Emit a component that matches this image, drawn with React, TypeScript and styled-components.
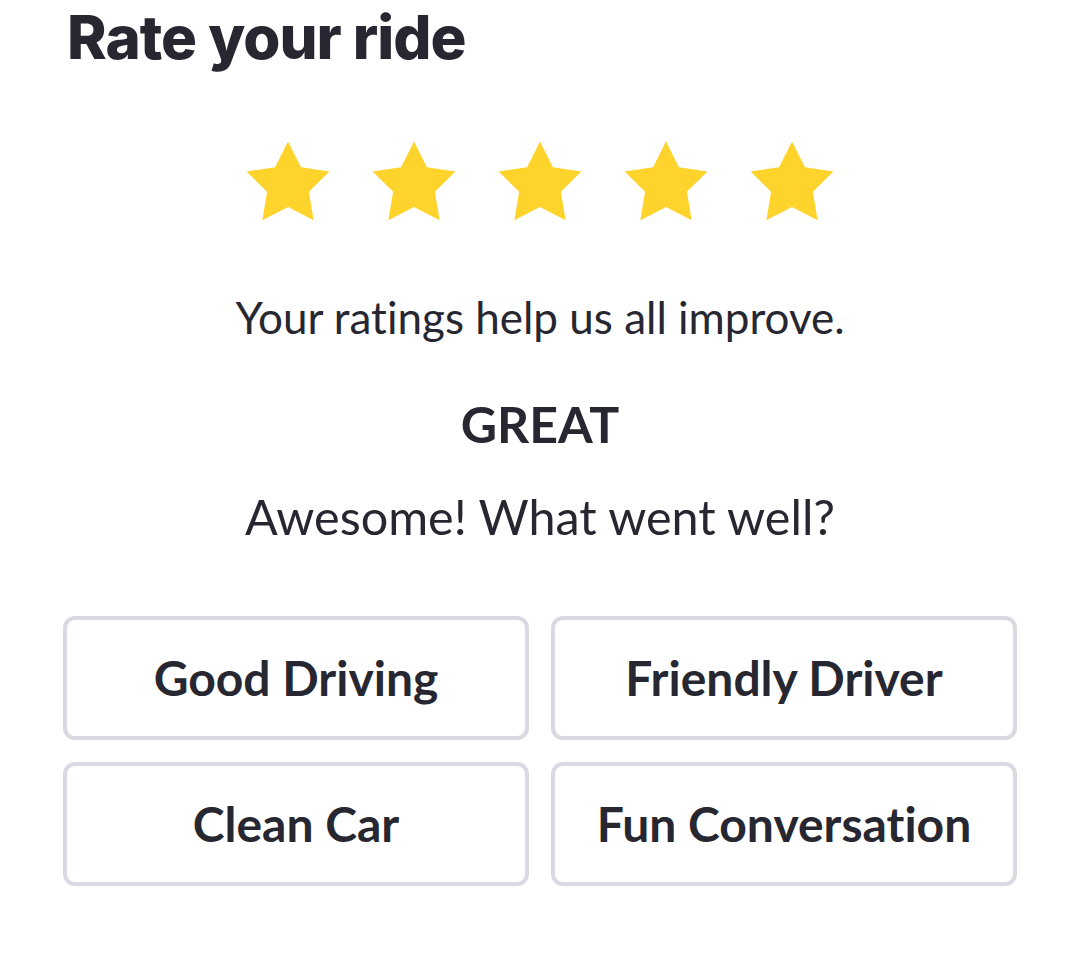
import React from "react";
import styled, { createGlobalStyle } from "styled-components";

const GlobalStyle = createGlobalStyle`
  html, body {
    margin: 0;
    padding: 0;
    background: #ffffff;
  }
  body {
    font-family: "Lato", "Liberation Sans", sans-serif;
    font-variant-ligatures: none;
    color: #272731;
  }
`;

const Page = styled.div`
  display: flex;
  flex-direction: column;
  padding: 7px 63px 0 63px;
`;

const Title = styled.h1`
  margin: 0 0 0 4px;
  font-family: "Inter", "Lato", sans-serif;
  font-weight: 800;
  font-size: 60px;
  line-height: 60px;
  letter-spacing: -1px;
  color: #272731;
`;

const StarRow = styled.div`
  display: flex;
  justify-content: center;
  gap: 42px;
  margin-top: 74px;
  height: 80px;
`;

const StarSvg = styled.svg`
  display: block;
  width: 84px;
  height: 80px;
`;

const Line = styled.p<{ $size: number; $weight?: number; $gap: number }>`
  margin: ${(p) => p.$gap}px 0 0 0;
  text-align: center;
  font-size: ${(p) => p.$size}px;
  line-height: ${(p) => p.$size}px;
  font-weight: ${(p) => p.$weight ?? 400};
  color: #272731;
`;

const Grid = styled.div`
  display: grid;
  grid-template-columns: 1fr 1fr;
  column-gap: 22px;
  row-gap: 22px;
  margin-top: 75px;
`;

const Choice = styled.button`
  box-sizing: border-box;
  height: 124px;
  display: flex;
  align-items: center;
  justify-content: center;
  background: #ffffff;
  border: 4px solid #d9d9e1;
  border-radius: 12px;
  font-family: "Lato", sans-serif;
  font-variant-ligatures: none;
  font-weight: 700;
  font-size: 48px;
  color: #272731;
  padding: 0;
  cursor: pointer;
`;

const starPoints =
  "42,0.4 54.93,26.2 83.47,30.53 62.92,50.8 67.63,79.27 42,66 16.37,79.27 21.08,50.8 0.53,30.53 29.07,26.2";

const Star = () => (
  <StarSvg viewBox="0 0 84 80">
    <polygon points={starPoints} fill="#FED32B" />
  </StarSvg>
);

const choices = ["Good Driving", "Friendly Driver", "Clean Car", "Fun Conversation"];

export default function App() {
  return (
    <>
      <GlobalStyle />
      <Page>
        <Title>Rate your ride</Title>
        <StarRow>
          {[0, 1, 2, 3, 4].map((i) => (
            <Star key={i} />
          ))}
        </StarRow>
        <Line $size={44} $gap={74}>
          Your ratings help us all improve.
        </Line>
        <Line $size={50} $weight={700} $gap={60}>
          GREAT
        </Line>
        <Line $size={48.5} $gap={43}>
          Awesome! What went well?
        </Line>
        <Grid>
          {choices.map((c) => (
            <Choice key={c}>{c}</Choice>
          ))}
        </Grid>
      </Page>
    </>
  );
}
